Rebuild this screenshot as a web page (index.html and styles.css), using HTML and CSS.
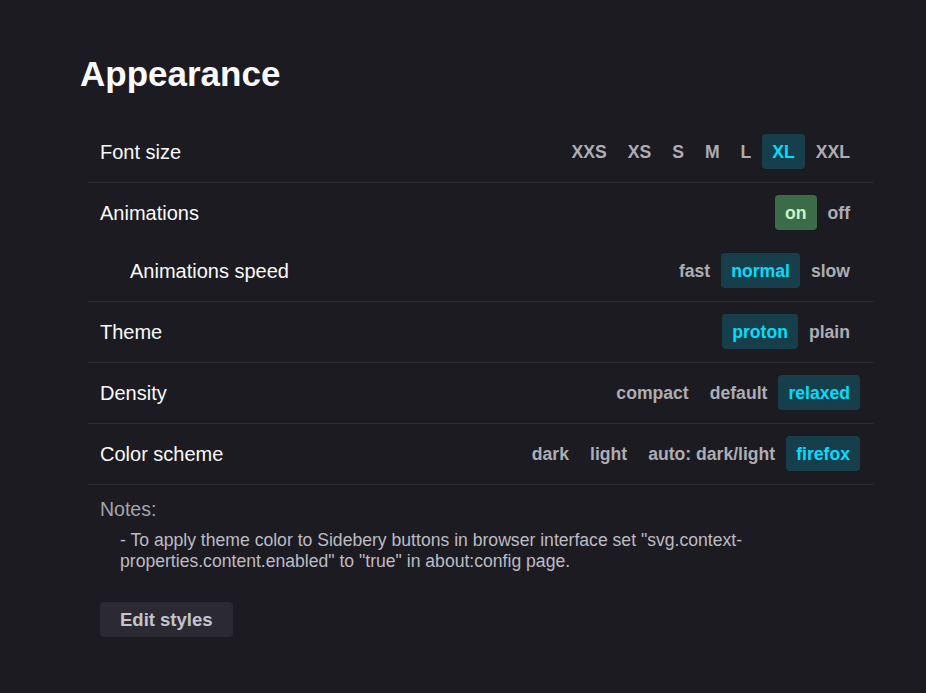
FILE: index.html
```html
<!DOCTYPE html>
<html lang="en">
<head>
<meta charset="utf-8">
<title>Appearance</title>
<link rel="stylesheet" href="styles.css">
</head>
<body>
<section class="section">
  <h2 class="title">Appearance</h2>
  <div class="list">
    <div class="row">
      <div class="label">Font size</div>
      <div class="opts">
        <span class="opt">XXS</span><span class="opt">XS</span><span class="opt">S</span><span class="opt">M</span><span class="opt">L</span><span class="opt active">XL</span><span class="opt">XXL</span>
      </div>
    </div>
    <div class="group">
      <div class="row row-top">
        <div class="label">Animations</div>
        <div class="opts"><span class="opt on">on</span><span class="opt">off</span></div>
      </div>
      <div class="row row-sub">
        <div class="label">Animations speed</div>
        <div class="opts"><span class="opt">fast</span><span class="opt active">normal</span><span class="opt">slow</span></div>
      </div>
    </div>
    <div class="row">
      <div class="label">Theme</div>
      <div class="opts"><span class="opt active">proton</span><span class="opt">plain</span></div>
    </div>
    <div class="row">
      <div class="label">Density</div>
      <div class="opts"><span class="opt">compact</span><span class="opt">default</span><span class="opt active">relaxed</span></div>
    </div>
    <div class="row">
      <div class="label">Color scheme</div>
      <div class="opts"><span class="opt">dark</span><span class="opt">light</span><span class="opt">auto: dark/light</span><span class="opt active">firefox</span></div>
    </div>
    <div class="notes">
      <div class="notes-title">Notes:</div>
      <div class="note">- To apply theme color to Sidebery buttons in browser interface set "svg.context-properties.content.enabled" to "true" in about:config page.</div>
      <button class="btn">Edit styles</button>
    </div>
  </div>
</section>
</body>
</html>
```

FILE: styles.css
```css
html, body {
  margin: 0;
  padding: 0;
  background: #1c1b22;
  height: 100%;
}
body {
  font-family: "Liberation Sans", Arial, sans-serif;
  color: #fbfbfe;
}
.section {
  padding: 54px 0 0 80px;
}
.title {
  margin: 0;
  font-size: 35px;
  line-height: 40px;
  font-weight: 700;
  color: #fbfbfe;
}
.list {
  margin: 28px 0 0 8px;
  width: 785px;
}
.row {
  display: flex;
  align-items: center;
  justify-content: space-between;
  padding: 12px 13px 13px 12px;
  border-bottom: 1px solid #2e2d34;
}
.group {
  border-bottom: 1px solid #2e2d34;
}
.group .row {
  border-bottom: none;
}
.group .row-top {
  padding-bottom: 11px;
}
.group .row-sub {
  padding-top: 12px;
  padding-bottom: 13px;
}
.row-sub .label {
  padding-left: 30px;
}
.label {
  font-size: 20px;
  line-height: 24px;
  color: #fbfbfe;
}
.opts {
  display: flex;
  gap: 1px;
}
.opt {
  font-size: 17.6px;
  line-height: 21px;
  font-weight: 700;
  padding: 8px 10px 6px;
  border-radius: 4px;
  color: #adadb3;
}
.opt.active {
  background: #173f4b;
  color: #00ddff;
}
.opt.on {
  background: #3b6b47;
  color: #c6f4c9;
}
.notes {
  padding: 12px 12px 0;
}
.notes-title {
  font-size: 19.5px;
  line-height: 24px;
  color: #a5a5ab;
}
.note {
  margin-top: 9px;
  padding-left: 20px;
  font-size: 17.6px;
  line-height: 21px;
  color: #bcbcc2;
}
.btn {
  margin-top: 30px;
  font-family: "Liberation Sans", Arial, sans-serif;
  font-size: 18.5px;
  line-height: 21px;
  font-weight: 700;
  padding: 7px 20px;
  border: none;
  border-radius: 4px;
  background: #2b2a33;
  color: #c4c4ca;
}
```
